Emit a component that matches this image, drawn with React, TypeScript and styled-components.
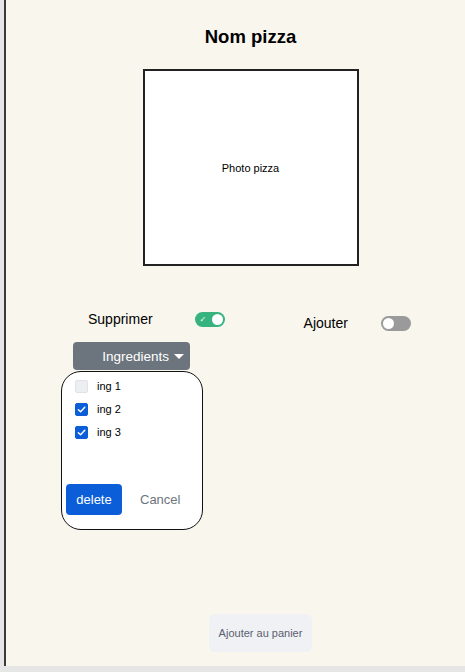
import styled, { createGlobalStyle } from 'styled-components';

const GlobalStyle = createGlobalStyle`
  html, body {
    margin: 0;
    padding: 0;
    background: #e6e6e6;
    font-family: "Liberation Sans", Arial, sans-serif;
  }
`;

const ingredients = [
  { name: 'ing 1', checked: false },
  { name: 'ing 2', checked: true },
  { name: 'ing 3', checked: true },
];

const Check = () => (
  <svg width="9" height="9" viewBox="0 0 10 10" fill="none">
    <path d="M1.5 5.3 L4 7.6 L8.6 2.4" stroke="#fff" strokeWidth="1.6" strokeLinecap="round" strokeLinejoin="round" />
  </svg>
);

const App = () => (
  <>
    <GlobalStyle />
    <Page>
      <Main>
        <Centered>
          <Title>Nom pizza</Title>
          <Photo>Photo pizza</Photo>
        </Centered>

        <ToggleRow>
          <ToggleGroup>
            <ToggleLabel>Supprimer</ToggleLabel>
            <Switch $on $gap={42}>
              <SwitchMark>✓</SwitchMark>
              <Knob $on />
            </Switch>
          </ToggleGroup>
          <ToggleGroup $offset={4} $left={79}>
            <ToggleLabel>Ajouter</ToggleLabel>
            <Switch $gap={33}>
              <Knob />
            </Switch>
          </ToggleGroup>
        </ToggleRow>

        <Dropdown>
          <DropButton>
            Ingredients
            <Caret />
          </DropButton>
          <Panel>
            <List>
              {ingredients.map((ing) => (
                <Item key={ing.name}>
                  <Box $checked={ing.checked}>{ing.checked && <Check />}</Box>
                  {ing.name}
                </Item>
              ))}
            </List>
            <Actions>
              <DeleteButton>delete</DeleteButton>
              <CancelButton>Cancel</CancelButton>
            </Actions>
          </Panel>
        </Dropdown>

        <Footer>
          <CartButton>Ajouter au panier</CartButton>
        </Footer>
      </Main>
    </Page>
  </>
);

export default App;

const Page = styled.div`
  padding-left: 4px;
  height: 672px;
  box-sizing: border-box;
`;

const Main = styled.main`
  height: 666px;
  box-sizing: border-box;
  background: #f9f6ee;
  border-left: 2px solid #3a3a3a;
  display: flex;
  flex-direction: column;
  padding-left: 30px;
`;

const Centered = styled.div`
  display: flex;
  flex-direction: column;
  align-items: center;
`;

const Title = styled.h1`
  margin: 25px 0 0;
  font-size: 18.5px;
  line-height: 23px;
  font-weight: 700;
  color: #000;
`;

const Photo = styled.div`
  margin-top: 21px;
  width: 216px;
  height: 197px;
  box-sizing: border-box;
  border: 2px solid #222;
  background: #fff;
  display: flex;
  align-items: center;
  justify-content: center;
  font-size: 11px;
  color: #000;
`;

const ToggleRow = styled.div`
  display: flex;
  align-items: flex-start;
  margin-top: 45px;
  padding-left: 52px;
`;

const ToggleGroup = styled.div<{ $offset?: number; $left?: number }>`
  display: flex;
  align-items: center;
  margin-top: ${({ $offset }) => $offset ?? 0}px;
  margin-left: ${({ $left }) => $left ?? 0}px;
`;

const ToggleLabel = styled.span`
  font-size: 14px;
  line-height: 16px;
  color: #000;
`;

const Switch = styled.div<{ $on?: boolean; $gap: number }>`
  position: relative;
  margin-left: ${({ $gap }) => $gap}px;
  width: 30px;
  height: 15px;
  border-radius: 8px;
  background: ${({ $on }) => ($on ? '#36b37e' : '#9a9a9a')};
  display: flex;
  align-items: center;
  justify-content: ${({ $on }) => ($on ? 'flex-end' : 'flex-start')};
  padding: 0 2px;
  box-sizing: border-box;
`;

const SwitchMark = styled.span`
  position: absolute;
  left: 5px;
  top: 1px;
  font-size: 8px;
  line-height: 13px;
  color: #fff;
  font-family: "DejaVu Sans", sans-serif;
`;

const Knob = styled.span<{ $on?: boolean }>`
  width: 11px;
  height: 11px;
  border-radius: 50%;
  background: #fff;
`;

const Dropdown = styled.div`
  display: flex;
  flex-direction: column;
  align-items: flex-start;
  margin-top: 11px;
  padding-left: 25px;
`;

const DropButton = styled.button`
  margin-left: 12px;
  width: 117px;
  height: 28px;
  border: none;
  border-radius: 4px;
  background: #6c757d;
  color: #fff;
  font-family: inherit;
  font-size: 13.5px;
  display: flex;
  align-items: center;
  justify-content: flex-end;
  padding: 0 6px 0 0;
  gap: 5px;
`;

const Caret = styled.span`
  width: 0;
  height: 0;
  border-left: 5px solid transparent;
  border-right: 5px solid transparent;
  border-top: 5px solid #fff;
`;

const Panel = styled.div`
  margin-top: 1px;
  width: 142px;
  height: 159px;
  box-sizing: border-box;
  border: 1.5px solid #111;
  border-radius: 20px;
  background: #fff;
  display: flex;
  flex-direction: column;
  justify-content: space-between;
  padding: 7px 0 14px 4px;
`;

const List = styled.div`
  display: flex;
  flex-direction: column;
  gap: 9px;
  padding-left: 9px;
`;

const Item = styled.label`
  display: flex;
  align-items: center;
  gap: 9px;
  font-size: 11px;
  line-height: 14px;
  color: #000;
`;

const Box = styled.span<{ $checked: boolean }>`
  width: 13px;
  height: 13px;
  box-sizing: border-box;
  border-radius: 2px;
  border: 1px solid ${({ $checked }) => ($checked ? '#0b5ed7' : '#dfe2e6')};
  background: ${({ $checked }) => ($checked ? '#0b5ed7' : '#eceef1')};
  display: flex;
  align-items: center;
  justify-content: center;
`;

const Actions = styled.div`
  display: flex;
  align-items: center;
  gap: 18px;
`;

const DeleteButton = styled.button`
  width: 56px;
  height: 31px;
  border: none;
  border-radius: 4px;
  background: #0b5ed7;
  color: #fff;
  font-family: inherit;
  font-size: 13px;
  padding: 0;
`;

const CancelButton = styled.button`
  border: none;
  background: none;
  color: #6c757d;
  font-family: inherit;
  font-size: 13px;
  padding: 0;
`;

const Footer = styled.div`
  display: flex;
  justify-content: center;
  margin-top: auto;
  margin-bottom: 14px;
  padding-left: 20px;
`;

const CartButton = styled.button`
  width: 103px;
  height: 38px;
  border: none;
  border-radius: 6px;
  background: #f0f1f4;
  color: #5a5f70;
  font-family: inherit;
  font-size: 11px;
  padding: 0;
`;
